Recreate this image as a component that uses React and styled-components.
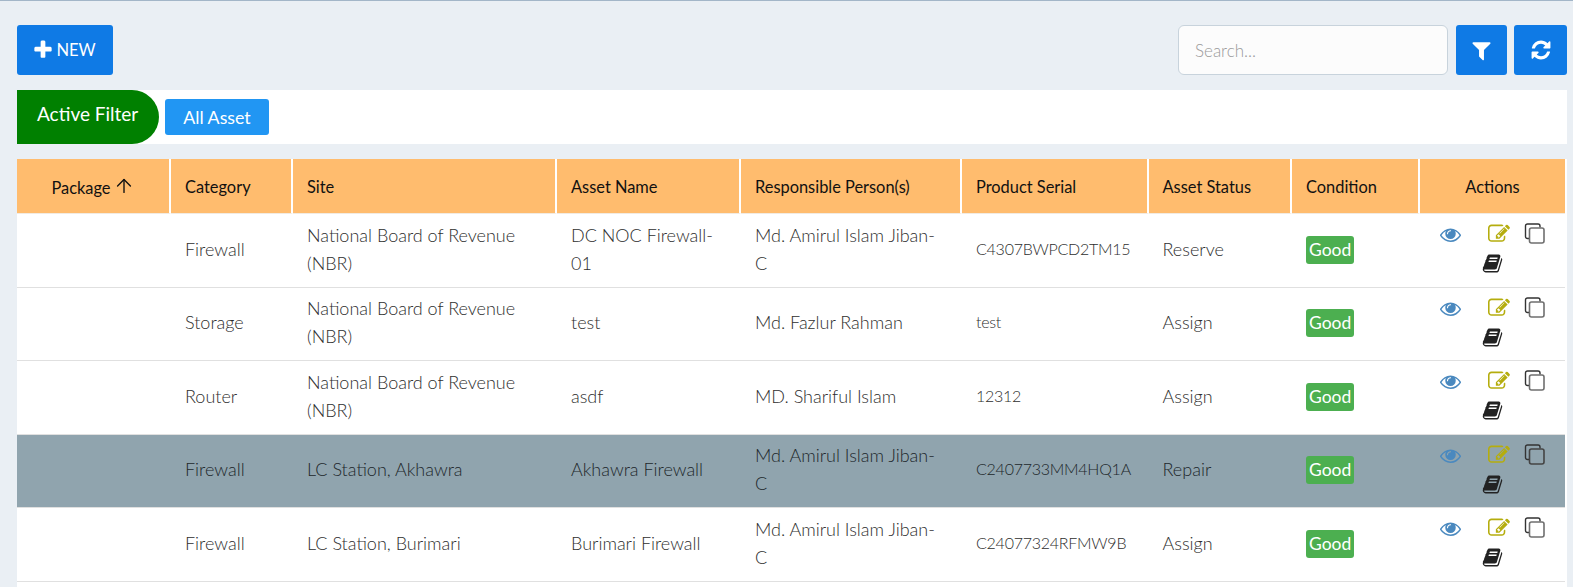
import React from "react";
import styled, { createGlobalStyle } from "styled-components";
import { ArrowUp } from "lucide-react";

const GlobalStyle = createGlobalStyle`
  html, body {
    margin: 0;
    height: 100%;
    overflow: hidden;
    background: #eaeff4;
    font-family: Lato, "Liberation Sans", sans-serif;
  }
  * { box-sizing: border-box; }
`;

const columns = [
  { label: "Package", width: 154, sorted: true, center: true },
  { label: "Category", width: 122 },
  { label: "Site", width: 264 },
  { label: "Asset Name", width: 184 },
  { label: "Responsible Person(s)", width: 221 },
  { label: "Product Serial", width: 186.5 },
  { label: "Asset Status", width: 143.5 },
  { label: "Condition", width: 128 },
  { label: "Actions", width: 145, center: true }
];

const assets = [
  { category: "Firewall", site: "National Board of Revenue (NBR)", name: "DC NOC Firewall-01", person: "Md. Amirul Islam Jiban-C", serial: "C4307BWPCD2TM15", status: "Reserve" },
  { category: "Storage", site: "National Board of Revenue (NBR)", name: "test", person: "Md. Fazlur Rahman", serial: "test", status: "Assign" },
  { category: "Router", site: "National Board of Revenue (NBR)", name: "asdf", person: "MD. Shariful Islam", serial: "12312", status: "Assign" },
  { category: "Firewall", site: "LC Station, Akhawra", name: "Akhawra Firewall", person: "Md. Amirul Islam Jiban-C", serial: "C2407733MM4HQ1A", status: "Repair", selected: true },
  { category: "Firewall", site: "LC Station, Burimari", name: "Burimari Firewall", person: "Md. Amirul Islam Jiban-C", serial: "C24077324RFMW9B", status: "Assign" }
];

const Page = styled.div`
  height: 587px;
  display: flex;
  flex-direction: column;
  padding: 0 6px 0 17px;
  border-top: 1px solid #a3b6c8;
`;

const Toolbar = styled.div`
  display: flex;
  justify-content: space-between;
  padding: 24px 0 15px;
`;

const ToolGroup = styled.div`
  display: flex;
  gap: 7px;
`;

const BlueButton = styled.button`
  height: 50px;
  width: ${(p) => p.$width}px;
  display: flex;
  align-items: center;
  justify-content: center;
  gap: 2px;
  padding: 0 ${(p) => (p.$label ? 2 : 0)}px 0 0;
  border: 0;
  border-radius: 3px;
  background: #0f7ae5;
  color: #fff;
  font: 16.5px Lato, sans-serif;
`;

const SearchInput = styled.input`
  width: 270px;
  height: 50px;
  margin-right: 1px;
  padding: 0 16px;
  border: 1px solid #c8d3dc;
  border-radius: 6px;
  background: #fcfcfc;
  font: 300 17px Lato, sans-serif;
  &::placeholder { color: #9a9a9a; opacity: 1; }
`;

const FilterBar = styled.div`
  height: 54px;
  margin-bottom: 15px;
  display: flex;
  align-items: center;
  gap: 6px;
  background: #fff;
`;

const FilterTag = styled.div`
  width: 142px;
  height: 54px;
  padding-left: 20px;
  padding-bottom: 7px;
  display: flex;
  align-items: center;
  background: #008000;
  border-radius: 0 27px 27px 0;
  color: #fff;
  font-size: 19px;
`;

const FilterChip = styled.button`
  width: 104px;
  height: 36px;
  padding: 0;
  border: 0;
  border-radius: 3px;
  background: #2196f3;
  color: #fff;
  font: 17.8px Lato, sans-serif;
`;

const TablePanel = styled.div`
  flex: 1;
  background: #fff;
`;

const Table = styled.table`
  width: 1548px;
  table-layout: fixed;
  border-collapse: separate;
  border-spacing: 0;
`;

const HeadCell = styled.th`
  width: ${(p) => p.$width}px;
  height: 55px;
  padding: 0 14px;
  background: #ffbc6e;
  border-right: 2px solid #fff;
  border-bottom: 1px solid #f2ebe2;
  color: #111;
  font-size: 16.4px;
  font-weight: 400;
  text-align: ${(p) => (p.$center ? "center" : "left")};
  &:last-child { border-right: 0; }
  svg { vertical-align: -3px; margin-left: 2px; }
`;

const Row = styled.tr`
  background: ${(p) => (p.$selected ? "#90a4ae" : "#fff")};
`;

const Cell = styled.td`
  height: 73.5px;
  padding: 0 14px 3px;
  border-bottom: 1px solid #e0e0e0;
  color: ${(p) => (p.$dark ? "#20272b" : "#2e2e2e")};
  font-size: 18px;
  font-weight: 300;
  line-height: 28px;
`;

const PersonCell = styled(Cell)`
  padding-right: 24px;
`;

const SerialCell = styled(Cell)`
  font-size: 16px;
  letter-spacing: -0.25px;
`;

const Badge = styled.span`
  display: inline-block;
  height: 28px;
  padding: 0 3px;
  border-radius: 3px;
  background: #4caf50;
  color: #fff;
  font-size: 17.5px;
  font-weight: 400;
  line-height: 27px;
  vertical-align: middle;
`;

const BadgeCell = styled(Cell)`
  padding-bottom: 4px;
`;

const ActionCell = styled(Cell)`
  padding: 9px 15px 0;
  vertical-align: top;
`;

const Actions = styled.div`
  display: flex;
  flex-wrap: wrap;
  justify-content: center;
  align-items: flex-start;
  row-gap: 8px;
`;

const ActionIcon = styled.svg`
  display: block;
  width: ${(p) => p.$size || 20}px;
  height: ${(p) => p.$size || 20}px;
  margin: ${(p) => p.$margin || 0};
  fill: ${(p) => p.$color};
`;

const CopyIcon = styled.svg`
  display: block;
  width: 21px;
  height: 21px;
  margin-left: 14px;
  fill: none;
  stroke-width: 1.4;
`;

const paths = {
  plus: "M1600 736v192q0 40-28 68t-68 28h-416v416q0 40-28 68t-68 28h-192q-40 0-68-28t-28-68v-416h-416q-40 0-68-28t-28-68v-192q0-40 28-68t68-28h416v-416q0-40 28-68t68-28h192q40 0 68 28t28 68v416h416q40 0 68 28t28 68z",
  filter: "M1595 295q17 41-14 70l-493 493v742q0 42-39 59-13 5-25 5-27 0-45-19l-256-256q-19-19-19-45v-486l-493-493q-31-29-14-70 17-39 59-39h1280q42 0 59 39z",
  refresh: "M1639 1056q0 5-1 7-64 268-268 434.500t-478 166.500q-146 0-282.500-55t-243.500-157l-129 129q-19 19-45 19t-45-19-19-45v-448q0-26 19-45t45-19h448q26 0 45 19t19 45-19 45l-137 137q71 66 161 102t187 36q134 0 250-65t186-179q11-17 53-117 8-23 30-23h192q13 0 22.500 9.500t9.500 22.500zm25-800v448q0 26-19 45t-45 19h-448q-26 0-45-19t-19-45 19-45l138-138q-148-137-349-137-134 0-250 65t-186 179q-11 17-53 117-8 23-30 23h-199q-13 0-22.500-9.500t-9.500-22.500v-7q65-268 270-434.500t480-166.500q146 0 284 55.500t245 156.500l130-129q19-19 45-19t45 19 19 45z",
  eye: "M1664 960q-152-236-381-353 61 104 61 225 0 185-131.500 316.500t-316.500 131.500-316.500-131.500-131.500-316.500q0-121 61-225-229 117-381 353 133 205 333.500 326.500t434.500 121.500 434.500-121.500 333.500-326.500zm-720-384q0-20-14-34t-34-14q-125 0-214.500 89.500t-89.500 214.500q0 20 14 34t34 14 34-14 14-34q0-86 61-147t147-61q20 0 34-14t14-34zm848 384q0 34-20 69-140 230-376.500 368.500t-499.500 138.500-499.500-139-376.500-368q-20-35-20-69t20-69q140-229 376.500-368t499.500-139 499.500 139 376.500 368q20 35 20 69z",
  edit: "M888 1184l116-116-152-152-116 116v56h96v96h56zm440-720q-16-16-33 1l-350 350q-17 17-1 33t33-1l350-350q17-17 1-33zm80 594v190q0 119-84.500 203.500t-203.500 84.500h-832q-119 0-203.500-84.500t-84.500-203.500v-832q0-119 84.500-203.500t203.500-84.500h832q63 0 117 25 15 7 18 23 3 17-9 29l-49 49q-14 14-32 8-23-6-45-6h-832q-66 0-113 47t-47 113v832q0 66 47 113t113 47h832q66 0 113-47t47-113v-126q0-13 9-22l64-64q15-15 35-7t20 29zm-96-738l288 288-672 672h-288v-288zm444 132l-92 92-288-288 92-92q28-28 68-28t68 28l152 152q28 28 28 68t-28 68z",
  book: "M1703 478q40 57 18 129l-275 906q-19 64-76.500 107.500t-122.500 43.500h-923q-77 0-148.500-53.500t-99.500-131.500q-24-67-2-127 0-4 3-27t4-37q1-8-3-21.500t-3-19.500q2-11 8-21t16.500-23.500 16.500-23.500q23-38 45-91.500t30-91.500q3-10 .5-30t-.5-28q3-11 17-28t17-23q21-36 42-92t25-90q1-9-2.500-32t.5-28q4-13 22-30.500t22-22.500q19-26 42.500-84.500t27.500-96.500q1-8-3-25.500t-2-26.500q2-8 9-18t18-23 17-21q8-12 16.500-30.500t15-35 16-36 19.500-32 26.500-23.500 36-11.500 47.500 5.500l-1 3q38-9 51-9h761q74 0 114 56t18 130l-274 906q-36 119-71.500 153.500t-128.500 34.500h-869q-27 0-38 15-11 16-1 43 24 70 144 70h923q29 0 56-15.500t35-41.500l300-987q7-22 5-57 38 15 59 43zm-1064 2q-4 13 2 22.500t20 9.500h608q13 0 25.500-9.500t16.500-22.500l21-64q4-13-2-22.500t-20-9.500h-608q-13 0-25.500 9.500t-16.500 22.500zm-83 256q-4 13 2 22.500t20 9.500h608q13 0 25.500-9.500t16.500-22.500l21-64q4-13-2-22.500t-20-9.500h-608q-13 0-25.500 9.500t-16.500 22.500z"
};

const Fa = ({ name, size, color = "#fff", margin }) => (
  <ActionIcon viewBox="0 0 1792 1792" $size={size} $color={color} $margin={margin}>
    <path d={paths[name]} />
  </ActionIcon>
);

const Copy = ({ color }) => (
  <CopyIcon viewBox="0 0 21 21" stroke={color}>
    <path d="M5 15.5H3.500a2 2 0 0 1-2-2V3a2 2 0 0 1 2-2H14a2 2 0 0 1 2 2v1.500" stroke="#333" />
    <rect x="5.500" y="5" width="14.500" height="15" rx="2" strokeWidth="1.600" />
  </CopyIcon>
);

export default function App() {
  return (
    <Page>
      <GlobalStyle />
      <Toolbar>
        <BlueButton $width={96} $label>
          <Fa name="plus" size={22} />
          NEW
        </BlueButton>
        <ToolGroup>
          <SearchInput placeholder="Search..." />
          <BlueButton $width={51}>
            <Fa name="filter" size={23} />
          </BlueButton>
          <BlueButton $width={53}>
            <Fa name="refresh" size={22} />
          </BlueButton>
        </ToolGroup>
      </Toolbar>
      <FilterBar>
        <FilterTag>Active Filter</FilterTag>
        <FilterChip>All Asset</FilterChip>
      </FilterBar>
      <TablePanel>
        <Table>
          <thead>
            <tr>
              {columns.map((col) => (
                <HeadCell key={col.label} $width={col.width} $center={col.center}>
                  {col.label}
                  {col.sorted && <ArrowUp size={22} strokeWidth={1.5} />}
                </HeadCell>
              ))}
            </tr>
          </thead>
          <tbody>
            {assets.map((asset, index) => (
              <Row key={index} $selected={asset.selected}>
                <Cell />
                <Cell $dark={asset.selected}>{asset.category}</Cell>
                <Cell $dark={asset.selected}>{asset.site}</Cell>
                <Cell $dark={asset.selected}>{asset.name}</Cell>
                <PersonCell $dark={asset.selected}>{asset.person}</PersonCell>
                <SerialCell $dark={asset.selected}>{asset.serial}</SerialCell>
                <Cell $dark={asset.selected}>{asset.status}</Cell>
                <BadgeCell>
                  <Badge>Good</Badge>
                </BadgeCell>
                <ActionCell>
                  <Actions>
                    <Fa name="eye" size={21} color="#4a89bf" margin="1px 27px 0 0" />
                    <Fa name="edit" size={22} color="#b5ad0e" />
                    <Copy color={asset.selected ? "#444" : "#6f6f6f"} />
                    <Fa name="book" size={21} color="#222" />
                  </Actions>
                </ActionCell>
              </Row>
            ))}
          </tbody>
        </Table>
      </TablePanel>
    </Page>
  );
}
